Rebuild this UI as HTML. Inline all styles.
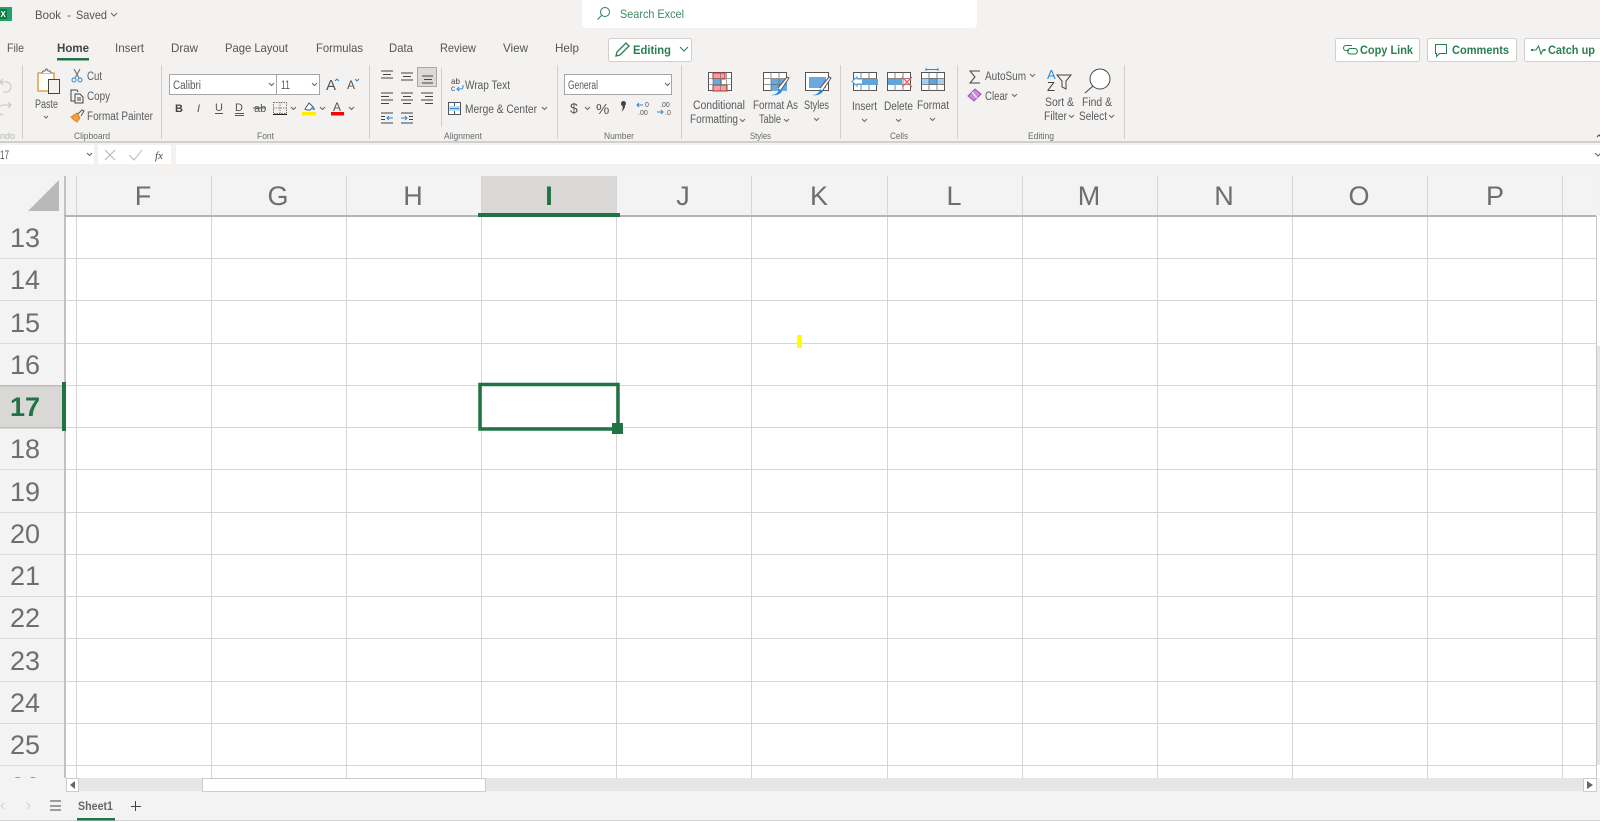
<!DOCTYPE html>
<html><head><meta charset="utf-8"><title>Book - Excel</title>
<style>
html,body{margin:0;padding:0;width:1600px;height:822px;overflow:hidden;background:#f3f2f1}
svg{display:block;position:absolute;left:0;top:0;filter:blur(.3px)}
text{font-family:"Liberation Sans",sans-serif;fill:#4a4a4a}
.t{font-size:12px;fill:#555}
.r{font-size:11.500px;fill:#5a5a5a}
.g{font-size:9px;fill:#6a6a6a}
.h{font-size:27px;fill:#6e6e6e;text-anchor:middle}
.n{font-size:27px;fill:#6e6e6e;text-anchor:middle}
.gr{fill:#2a7f52;font-weight:bold;font-size:12px}
.c{fill:none;stroke:#666;stroke-width:1}
.l{fill:none;stroke:#444;stroke-width:1}
</style></head><body>
<svg width="1600" height="822" viewBox="0 0 1600 822" xmlns="http://www.w3.org/2000/svg">
<rect width="1600" height="822" fill="#f3f2f1"/>
<!-- title bar -->
<rect x="0" y="7" width="12" height="14" fill="#21a366"/><rect x="0" y="9" width="7" height="10" fill="#107c41"/>
<text x="0.500" y="17" style="font-size:8px;fill:#fff;font-weight:bold">X</text>
<text class="t" x="35" y="19" textLength="26" lengthAdjust="spacingAndGlyphs">Book</text>
<text class="t" x="67" y="19">-</text>
<text class="t" x="76" y="19" textLength="31" lengthAdjust="spacingAndGlyphs">Saved</text>
<path class="c" d="M111 13l3 3 3-3"/>
<path d="M582 0H977V24a4 4 0 0 1-4 4H586a4 4 0 0 1-4-4Z" fill="#fff"/>
<circle cx="605" cy="12" r="4.500" fill="none" stroke="#2a7f52" stroke-width="1"/><path d="M601.500 15.500L597.500 19.500" stroke="#2a7f52" fill="none"/>
<text x="620" y="18" style="font-size:12px;fill:#3c8a62" textLength="64" lengthAdjust="spacingAndGlyphs">Search Excel</text>
<!-- tabs -->
<text class="t" x="7" y="52" textLength="17" lengthAdjust="spacingAndGlyphs">File</text>
<text class="t" x="57" y="52" textLength="32" lengthAdjust="spacingAndGlyphs" style="font-weight:bold;fill:#444">Home</text>
<rect x="57" y="58" width="32" height="2.500" fill="#217346"/>
<text class="t" x="115" y="52" textLength="29" lengthAdjust="spacingAndGlyphs">Insert</text>
<text class="t" x="171" y="52" textLength="27" lengthAdjust="spacingAndGlyphs">Draw</text>
<text class="t" x="225" y="52" textLength="63" lengthAdjust="spacingAndGlyphs">Page Layout</text>
<text class="t" x="316" y="52" textLength="47" lengthAdjust="spacingAndGlyphs">Formulas</text>
<text class="t" x="389" y="52" textLength="24" lengthAdjust="spacingAndGlyphs">Data</text>
<text class="t" x="440" y="52" textLength="36" lengthAdjust="spacingAndGlyphs">Review</text>
<text class="t" x="503" y="52" textLength="25" lengthAdjust="spacingAndGlyphs">View</text>
<text class="t" x="555" y="52" textLength="24" lengthAdjust="spacingAndGlyphs">Help</text>
<!-- top buttons -->
<g fill="#fff" stroke="#d2d0ce"><rect x="608.500" y="38.500" width="83" height="23" rx="2"/><rect x="1335.500" y="38.500" width="84" height="23" rx="2"/><rect x="1427.500" y="38.500" width="89" height="23" rx="2"/><rect x="1524.500" y="38.500" width="80" height="23" rx="2"/></g>
<path d="M616 56l1-4 9-9 3 3-9 9Z" fill="none" stroke="#2a7f52" stroke-width="1.300"/>
<text class="gr" x="633" y="54" textLength="38" lengthAdjust="spacingAndGlyphs">Editing</text>
<path d="M680 47l4 4 4-4" fill="none" stroke="#2a7f52"/>
<path d="M1350 45.500h-4a2.500 2.500 0 0 0 0 5h3M1349 45.500h3M1350 48.500h5a2.800 2.800 0 0 1 0 5.500h-5a2.800 2.800 0 0 1 0-5.500" fill="none" stroke="#2a7f52" stroke-width="1.100"/>
<text class="gr" x="1360" y="54" textLength="53" lengthAdjust="spacingAndGlyphs">Copy Link</text>
<path d="M1435.500 44.500h11v9h-7l-3 3v-3h-1Z" fill="none" stroke="#2a7f52"/>
<text class="gr" x="1452" y="54" textLength="57" lengthAdjust="spacingAndGlyphs">Comments</text>
<path d="M1533 50h3l2.500-4 2.500 8 2-4h1" fill="none" stroke="#2a7f52" stroke-width="1.100"/><rect x="1531" y="49" width="2" height="2" fill="#2a7f52"/><rect x="1543.500" y="49" width="2" height="2" fill="#2a7f52"/>
<text class="gr" x="1548" y="54" textLength="47" lengthAdjust="spacingAndGlyphs">Catch up</text>
<!-- separators -->
<g fill="#d2d0ce"><rect x="22" y="65" width="1" height="74"/><rect x="161" y="65" width="1" height="74"/><rect x="369" y="65" width="1" height="74"/><rect x="441" y="68" width="1" height="59"/><rect x="557" y="65" width="1" height="74"/><rect x="681" y="65" width="1" height="74"/><rect x="840" y="65" width="1" height="74"/><rect x="957" y="65" width="1" height="74"/><rect x="1124" y="65" width="1" height="74"/></g>
<!-- undo/redo -->
<path d="M0 82h6a5 5 0 0 1 0 10H3M3 79l-3 3 3 3M11 105H4a5 5 0 0 0-1 10M8 102l3 3-3 3" fill="none" stroke="#c5c5c5"/>
<!-- clipboard -->
<rect x="38" y="73" width="16" height="18" fill="#fff" stroke="#e09225" stroke-width="1.300"/>
<path d="M42 73l1-2h2l1-2h1l1 2h2l1 2" fill="#fff" stroke="#666"/>
<rect x="48.500" y="79.500" width="11" height="14" fill="#f3f2f1" stroke="#444"/>
<text class="r" x="35" y="108" textLength="23" lengthAdjust="spacingAndGlyphs">Paste</text>
<path class="c" d="M44 116l2 2 2-2"/>
<path d="M74 69l5 9M80 69l-5 9" stroke="#666" fill="none"/><circle cx="74" cy="80" r="2" fill="none" stroke="#2b88d8"/><circle cx="80" cy="80" r="2" fill="none" stroke="#2b88d8"/>
<text class="r" x="87" y="80" textLength="15" lengthAdjust="spacingAndGlyphs">Cut</text>
<path d="M75 101h-4V90h6l1 2M75 94h5l3 3v6h-8ZM77 98h4M77 100h4" fill="none" stroke="#444"/>
<text class="r" x="87" y="100" textLength="23" lengthAdjust="spacingAndGlyphs">Copy</text>
<path d="M71 117l6-4 3 5-3 4-3-2Z" fill="#f0a040" stroke="#e08020"/><path d="M78 114l4-4 2 1-3 5" fill="none" stroke="#555"/>
<text class="r" x="87" y="120" textLength="66" lengthAdjust="spacingAndGlyphs">Format Painter</text>
<!-- font -->
<rect x="169.500" y="74.500" width="150" height="20" fill="#fff" stroke="#a6a6a6"/><rect x="276" y="74" width="1" height="21" fill="#a6a6a6"/>
<text class="r" x="173" y="89" textLength="28" lengthAdjust="spacingAndGlyphs">Calibri</text>
<path class="c" d="M269 83l2.500 2.500 2.500-2.500M312 83l2.500 2.500 2.500-2.500"/>
<text class="r" x="281" y="89" textLength="9" lengthAdjust="spacingAndGlyphs">11</text>
<text x="326" y="90" style="font-size:15px;fill:#555">A</text><path d="M335 81l2-2 2 2" fill="none" stroke="#2b88d8"/>
<text x="347" y="89" style="font-size:12px;fill:#555">A</text><path d="M355 79l2 2 2-2" fill="none" stroke="#2b88d8"/>
<text x="175" y="112" style="font-size:11px;font-weight:bold;fill:#444">B</text>
<text x="197" y="112" style="font-size:11px;font-style:italic;fill:#555">I</text>
<text x="215" y="111" style="font-size:11px;fill:#555">U</text><rect x="215" y="113" width="8" height="1" fill="#555"/>
<text x="235" y="111" style="font-size:11px;fill:#555">D</text><rect x="235" y="113" width="9" height="1" fill="#555"/><rect x="235" y="115" width="9" height="1" fill="#555"/>
<text x="254" y="112" style="font-size:11px;fill:#555">ab</text><rect x="253" y="107.500" width="13" height="1" fill="#555"/>
<rect x="273.500" y="102.500" width="13" height="11" fill="none" stroke="#777" stroke-dasharray="1.500 1"/><path d="M280 102v11M273 108h13" stroke="#888" stroke-dasharray="1.500 1"/><rect x="273" y="114" width="14" height="1" fill="#222"/>
<path class="c" d="M291 107l2.500 2.500 2.500-2.500M320 107l2.500 2.500 2.500-2.500M349 107l2.500 2.500 2.500-2.500"/>
<path d="M305 109l4-6 4 4-3 3h-3Z" fill="#fff" stroke="#555"/><path d="M310 103l4 4 1 3-2 0-1-3" fill="#2b88d8"/><rect x="302" y="112" width="14" height="3.500" fill="#ffee00"/>
<text x="333" y="111" style="font-size:12px;fill:#555">A</text><rect x="331" y="112" width="13" height="3.500" fill="#f00"/>
<!-- alignment -->
<rect x="417.500" y="67.500" width="19" height="19" fill="#dbdad8" stroke="#a9a9a9"/>
<path class="l" d="M381 71h12M383 74.500h8M381 78h12M401 73h12M403 76.500h8M401 80h12M422 76h11M424 79.500h8M422 83h11M381 93h12M381 96.500h8M381 100h12M381 103.500h8M401 93h12M403 96.500h8M401 100h12M403 103.500h8M421 93h12M425 96.500h8M421 100h12M425 103.500h8M381 113h12M381 123h12M381 116.500h4M381 119.500h4M401 113h12M401 123h12M409 116.500h4M409 119.500h4" stroke="#555"/>
<path d="M387 118h6M389 116l-2 2 2 2M401 118h6M405 116l2 2-2 2" fill="none" stroke="#2b88d8"/>
<text x="451" y="84" style="font-size:8px;fill:#444">ab</text><text x="451" y="91" style="font-size:8px;fill:#444">c</text>
<path d="M463 85v2a2 2 0 0 1-2 2h-4M459 87l-2 2 2 2" fill="none" stroke="#2b88d8"/>
<text class="r" x="465" y="89" textLength="45" lengthAdjust="spacingAndGlyphs">Wrap Text</text>
<rect x="448.500" y="102.500" width="12" height="12" fill="#fff" stroke="#555"/><rect x="449" y="106" width="11" height="5" fill="#bcdcf4"/><path d="M450 108.500h9" stroke="#2b88d8"/><path d="M454.500 102v4M454.500 111v3" stroke="#555"/>
<text class="r" x="465" y="113" textLength="72" lengthAdjust="spacingAndGlyphs">Merge &amp; Center</text>
<path class="c" d="M542 107l2.500 2.500 2.500-2.500"/>
<!-- number -->
<rect x="564.500" y="74.500" width="107" height="20" fill="#fff" stroke="#a6a6a6"/>
<text class="r" x="568" y="89" textLength="30" lengthAdjust="spacingAndGlyphs">General</text>
<path class="c" d="M665 83l2.500 2.500 2.500-2.500M585 107l2.500 2.500 2.500-2.500"/>
<text x="570" y="113" style="font-size:14px;fill:#555">$</text>
<text x="596" y="114" style="font-size:15px;fill:#555">%</text>
<path d="M621 103.500a2.500 2.500 0 1 1 4 2c0 2-1 4.500-3.500 6c1-2 1.500-3 1-5.500a2.500 2.500 0 0 1-1.500-2.500Z" fill="#444"/>
<text x="645" y="107" style="font-size:7px;fill:#555">0</text><text x="638" y="115" style="font-size:7px;fill:#555">.00</text><path d="M643 105h-6M639 103l-2 2 2 2" fill="none" stroke="#2b88d8"/>
<text x="660" y="107" style="font-size:7px;fill:#555">.00</text><text x="665" y="115" style="font-size:7px;fill:#555">.0</text><path d="M657 112h6M661 110l2 2-2 2" fill="none" stroke="#2b88d8"/>
<!-- styles -->
<g>
<rect x="708.500" y="72.500" width="23" height="18" fill="#fff" stroke="#555"/>
<rect x="713" y="73" width="12" height="6" fill="#f8a0a0" stroke="#e02020"/><rect x="713" y="85" width="14" height="6" fill="#f8a0a0" stroke="#e02020"/><rect x="713" y="79" width="9" height="6" fill="#6aa8e0"/>
<path d="M708 78.500h24M708 84.500h24M713 72v19M720.500 72v19M726.500 72v19" stroke="#666" fill="none" opacity=".6"/>
<text class="r" x="693" y="109" textLength="52" lengthAdjust="spacingAndGlyphs">Conditional</text>
<text class="r" x="690" y="123" textLength="48" lengthAdjust="spacingAndGlyphs">Formatting</text>
<path class="c" d="M740 119l2.500 2.500 2.500-2.500"/>
<rect x="763.500" y="72.500" width="23" height="18" fill="#fff" stroke="#555"/><rect x="771" y="79" width="16" height="12" fill="#6aa8e0"/>
<path d="M763 78.500h24M763 84.500h24M771 72v19M779 72v19" stroke="#666" fill="none" opacity=".7"/>
<path d="M778 88l9-11 2 1-8 12" fill="#fff" stroke="#555"/><path d="M771 95c3 0 7-1 8-6l3 2c-1 3-6 5-11 4Z" fill="#2b88d8"/>
<text class="r" x="753" y="109" textLength="45" lengthAdjust="spacingAndGlyphs">Format As</text>
<text class="r" x="759" y="123" textLength="22" lengthAdjust="spacingAndGlyphs">Table</text>
<path class="c" d="M784 119l2.500 2.500 2.500-2.500"/>
<rect x="805.500" y="72.500" width="23" height="18" fill="#fff" stroke="#555"/><rect x="809" y="77" width="17" height="11" fill="#6aa8e0"/>
<path d="M820 88l9-11 2 1-8 12" fill="#fff" stroke="#555"/><path d="M812 95c3 0 7-1 8-6l3 2c-1 3-6 5-11 4Z" fill="#2b88d8"/>
<text class="r" x="804" y="109" textLength="25" lengthAdjust="spacingAndGlyphs">Styles</text>
<path class="c" d="M814 118l2.500 2.500 2.500-2.500"/>
</g>
<!-- cells -->
<g>
<rect x="853.500" y="72.500" width="23" height="18" fill="#fff" stroke="#555"/><path d="M853 78.500h24M853 84.500h24M861 72v19M869 72v19" stroke="#666" fill="none" opacity=".8"/><rect x="858" y="79" width="20" height="6" fill="#5ea5de"/>
<path d="M862 79h-5v-2l-5 4.500 5 4.500v-2h5" fill="#fff" stroke="#4a9ee0"/>
<text class="r" x="852" y="110" textLength="25" lengthAdjust="spacingAndGlyphs">Insert</text><path class="c" d="M862 119l2.500 2.500 2.500-2.500"/>
<rect x="887.500" y="72.500" width="23" height="18" fill="#fff" stroke="#555"/><path d="M887 78.500h24M887 84.500h24M895 72v19M903 72v19" stroke="#666" fill="none" opacity=".8"/><rect x="888" y="79" width="14" height="6" fill="#5ea5de"/>
<path d="M902 77l10 10M912 77l-10 10" stroke="#f06060" stroke-width="1.300"/>
<text class="r" x="884" y="110" textLength="29" lengthAdjust="spacingAndGlyphs">Delete</text><path class="c" d="M896 119l2.500 2.500 2.500-2.500"/>
<path d="M926 69.500h12M926 68v3M938 68v3" stroke="#2b88d8" fill="none"/>
<rect x="921.500" y="72.500" width="23" height="18" fill="#fff" stroke="#555"/><rect x="929" y="78" width="8" height="7" fill="#5ea5de"/><rect x="922" y="79" width="22" height="5" fill="#5ea5de" opacity=".55"/><path d="M921 78.500h24M921 84.500h24M929 72v19M937 72v19" stroke="#666" fill="none" opacity=".8"/>
<text class="r" x="917" y="109" textLength="32" lengthAdjust="spacingAndGlyphs">Format</text><path class="c" d="M930 118l2.500 2.500 2.500-2.500"/>
</g>
<!-- editing -->
<path d="M980 71h-10l5 6-5 6h10" fill="none" stroke="#444"/>
<text class="r" x="985" y="80" textLength="41" lengthAdjust="spacingAndGlyphs">AutoSum</text><path class="c" d="M1030 74l2.500 2.500 2.500-2.500"/>
<path d="M968 96l7-7 6 5-7 7Z" fill="#c88fd8" stroke="#9b4fb8"/><path d="M972 92l5 6" stroke="#fff"/>
<text class="r" x="985" y="100" textLength="23" lengthAdjust="spacingAndGlyphs">Clear</text><path class="c" d="M1012 94l2.500 2.500 2.500-2.500"/>
<text x="1047" y="79" style="font-size:13px;fill:#2b88d8">A</text><text x="1047" y="91" style="font-size:13px;fill:#444">Z</text>
<path d="M1057 75h14l-5 6v8l-4-2v-6Z" fill="none" stroke="#444"/>
<text class="r" x="1045" y="106" textLength="29" lengthAdjust="spacingAndGlyphs">Sort &amp;</text>
<text class="r" x="1044" y="120" textLength="23" lengthAdjust="spacingAndGlyphs">Filter</text><path class="c" d="M1069 115l2.500 2.500 2.500-2.500"/>
<circle cx="1100" cy="79" r="10" fill="#fff" stroke="#444"/><path d="M1093 86l-8 7" stroke="#444" fill="none"/>
<text class="r" x="1082" y="106" textLength="30" lengthAdjust="spacingAndGlyphs">Find &amp;</text>
<text class="r" x="1079" y="120" textLength="28" lengthAdjust="spacingAndGlyphs">Select</text><path class="c" d="M1109 115l2.500 2.500 2.500-2.500"/>
<path d="M1597 137l2-2 2 2" fill="none" stroke="#444"/>
<!-- group labels -->
<text class="g" x="0" y="139" textLength="15" lengthAdjust="spacingAndGlyphs" style="fill:#b5b5b5">ndo</text>
<text class="g" x="74" y="139" textLength="36" lengthAdjust="spacingAndGlyphs">Clipboard</text>
<text class="g" x="257" y="139" textLength="17" lengthAdjust="spacingAndGlyphs">Font</text>
<text class="g" x="444" y="139" textLength="38" lengthAdjust="spacingAndGlyphs">Alignment</text>
<text class="g" x="604" y="139" textLength="30" lengthAdjust="spacingAndGlyphs">Number</text>
<text class="g" x="750" y="139" textLength="21" lengthAdjust="spacingAndGlyphs">Styles</text>
<text class="g" x="890" y="139" textLength="18" lengthAdjust="spacingAndGlyphs">Cells</text>
<text class="g" x="1028" y="139" textLength="26" lengthAdjust="spacingAndGlyphs">Editing</text>
<rect x="0" y="141" width="1600" height="2" fill="#d2d0ce"/>
<!-- formula bar -->
<rect x="0" y="145" width="94" height="19" fill="#fff"/><rect x="98" y="145" width="73" height="19" fill="#fff"/><rect x="176" y="145" width="1424" height="19" fill="#fff"/>
<text class="t" x="0" y="159" textLength="9" lengthAdjust="spacingAndGlyphs">17</text>
<path class="c" d="M87 153l2.500 2.500 2.500-2.500M1595 153l3 3 3-3"/>
<path d="M105 150l10 10M115 150l-10 10M129 155l5 5 8-10" fill="none" stroke="#b5b5b5"/>
<text x="155" y="159" style="font-size:11px;font-family:'Liberation Serif',serif;font-style:italic;fill:#444">fx</text>
<!-- header backgrounds -->
<rect x="0" y="176" width="1597" height="40" fill="#f3f3f3"/>
<rect x="0" y="216" width="64" height="562" fill="#f3f3f3"/>
<rect x="66" y="216" width="1531" height="562" fill="#fff"/>
<rect x="481" y="176" width="136" height="38" fill="#d9d8d6"/>
<rect x="0" y="385" width="62" height="42" fill="#d9d8d6"/>
<path d="M28 211H59V180Z" fill="#b9b9b9"/>
<!-- grid rows -->
<g fill="#d6d6d6">
<rect x="66" y="258" width="1530" height="1"/><rect x="66" y="300" width="1530" height="1"/><rect x="66" y="343" width="1530" height="1"/><rect x="66" y="385" width="1530" height="1"/><rect x="66" y="427" width="1530" height="1"/><rect x="66" y="469" width="1530" height="1"/><rect x="66" y="512" width="1530" height="1"/><rect x="66" y="554" width="1530" height="1"/><rect x="66" y="596" width="1530" height="1"/><rect x="66" y="638" width="1530" height="1"/><rect x="66" y="681" width="1530" height="1"/><rect x="66" y="723" width="1530" height="1"/><rect x="66" y="765" width="1530" height="1"/>
</g>
<g fill="#dcdcdc">
<rect x="0" y="258" width="64" height="1"/><rect x="0" y="300" width="64" height="1"/><rect x="0" y="343" width="64" height="1"/><rect x="0" y="385" width="64" height="1.500" fill="#bdbdbb"/><rect x="0" y="427" width="64" height="1.500" fill="#bdbdbb"/><rect x="0" y="469" width="64" height="1"/><rect x="0" y="512" width="64" height="1"/><rect x="0" y="554" width="64" height="1"/><rect x="0" y="596" width="64" height="1"/><rect x="0" y="638" width="64" height="1"/><rect x="0" y="681" width="64" height="1"/><rect x="0" y="723" width="64" height="1"/><rect x="0" y="765" width="64" height="1"/>
</g>
<!-- grid cols -->
<g fill="#d6d6d6">
<rect x="76" y="176" width="1" height="602"/><rect x="211" y="176" width="1" height="602"/><rect x="346" y="176" width="1" height="602"/><rect x="481" y="176" width="1" height="602"/><rect x="616" y="176" width="1" height="602"/><rect x="751" y="176" width="1" height="602"/><rect x="887" y="176" width="1" height="602"/><rect x="1022" y="176" width="1" height="602"/><rect x="1157" y="176" width="1" height="602"/><rect x="1292" y="176" width="1" height="602"/><rect x="1427" y="176" width="1" height="602"/><rect x="1562" y="176" width="1" height="602"/>
</g>
<rect x="64" y="176" width="2" height="602" fill="#c2c2c2"/>
<rect x="64" y="215" width="1532" height="2" fill="#b4b4b4"/>
<rect x="1596" y="216" width="1" height="562" fill="#c8c8c8"/>
<rect x="1597" y="216" width="3" height="130" fill="#fff"/><rect x="1597" y="346" width="3" height="419" fill="#e6e6e6"/><rect x="1597" y="765" width="3" height="13" fill="#fff"/>
<!-- column letters -->
<text class="h" x="143" y="205">F</text><text class="h" x="278" y="205">G</text><text class="h" x="413" y="205">H</text>
<text class="h" x="549" y="205" style="fill:#217346;font-weight:bold">I</text>
<text class="h" x="683" y="205">J</text><text class="h" x="819" y="205">K</text><text class="h" x="954" y="205">L</text><text class="h" x="1089" y="205">M</text><text class="h" x="1224" y="205">N</text><text class="h" x="1359" y="205">O</text><text class="h" x="1495" y="205">P</text>
<!-- row numbers -->
<text class="n" x="25" y="247">13</text><text class="n" x="25" y="289">14</text><text class="n" x="25" y="332">15</text><text class="n" x="25" y="374">16</text>
<text class="n" x="25" y="416" style="fill:#217346;font-weight:bold">17</text>
<text class="n" x="25" y="458">18</text><text class="n" x="25" y="501">19</text><text class="n" x="25" y="543">20</text><text class="n" x="25" y="585">21</text><text class="n" x="25" y="627">22</text><text class="n" x="25" y="670">23</text><text class="n" x="25" y="712">24</text><text class="n" x="25" y="754">25</text>
<clipPath id="cl"><rect x="0" y="766" width="64" height="12"/></clipPath>
<text class="n" x="25" y="796" clip-path="url(#cl)">26</text>
<!-- selection -->
<rect x="480" y="384.500" width="138" height="44.500" fill="none" stroke="#217346" stroke-width="3.500"/>
<rect x="612" y="423" width="11" height="11" fill="#217346"/>
<rect x="62" y="382" width="4" height="49" fill="#217346"/>
<rect x="478" y="213" width="142" height="4" fill="#217346"/>
<rect x="797" y="335" width="5" height="13" fill="#ffff00"/>
<!-- scrollbar -->
<rect x="66" y="778" width="1531" height="13" fill="#e6e6e6"/>
<rect x="66.500" y="778.500" width="12" height="13" fill="#fff" stroke="#ccc"/><path d="M70 785l5-4v8Z" fill="#666"/>
<rect x="202.500" y="778.500" width="283" height="13" fill="#fff" stroke="#ccc"/>
<rect x="1583.500" y="778.500" width="13" height="13" fill="#fff" stroke="#ccc"/><path d="M1587 781l6 4-6 4Z" fill="#666"/>
<rect x="0" y="778" width="64" height="13" fill="#f3f3f3"/>
<!-- sheet bar -->
<rect x="0" y="792" width="1600" height="28" fill="#f3f3f3"/>
<rect x="0" y="820" width="1600" height="1" fill="#d6d6d6"/><rect x="0" y="821" width="1600" height="1" fill="#fff"/>
<path d="M4 803l-3 3 3 3M27 803l3 3-3 3" fill="none" stroke="#d0d0d0"/>
<path d="M50 801h11M50 806h11M50 810h11" stroke="#444" fill="none"/>
<text class="t" x="78" y="810" textLength="35" lengthAdjust="spacingAndGlyphs" style="font-weight:bold;fill:#666">Sheet1</text>
<rect x="77" y="818" width="38" height="2.500" fill="#217346"/>
<path d="M135.500 801v10M131 806.500h10" stroke="#444" fill="none"/>
</svg>
</body></html>
